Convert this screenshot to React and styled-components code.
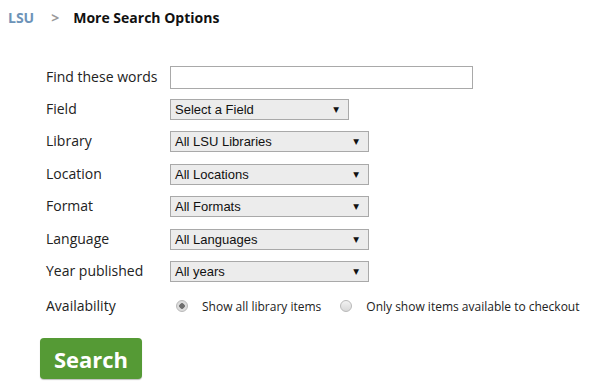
import React from 'react';
import styled, { createGlobalStyle } from 'styled-components';

const GlobalStyle = createGlobalStyle`
  body {
    margin: 0;
    background: #ffffff;
    font-family: 'Open Sans', sans-serif;
  }
`;

const Page = styled.div`
  width: 593px;
  height: 390px;
  overflow: hidden;
`;

const Breadcrumb = styled.div`
  display: flex;
  align-items: center;
  height: 34px;
  padding-left: 8px;
  font-size: 14px;
  font-weight: 700;
`;

const Crumb = styled.span`
  color: #6d93b8;
`;

const Sep = styled.span`
  color: #9a9a9a;
  margin: 0 14px 0 17px;
`;

const Current = styled.span`
  color: #111111;
`;

const Form = styled.div`
  display: grid;
  grid-template-columns: 124px auto;
  grid-auto-rows: 32.4px;
  align-items: center;
  padding: 27px 0 0 46px;
`;

const Label = styled.div`
  font-size: 14px;
  color: #222222;
  line-height: 20px;
  margin-top: ${(p) => (p.$shift ? p.$shift : -1)}px;
`;

const TextInput = styled.div`
  width: 301px;
  height: 21px;
  border: 1px solid #a9a9a9;
  background: #ffffff;
`;

const Select = styled.div`
  display: flex;
  align-items: center;
  justify-content: space-between;
  box-sizing: border-box;
  width: ${(p) => p.$width}px;
  height: 21px;
  padding: 0 9px 0 4px;
  border: 1px solid #a9a9a9;
  background: #ececec;
  font-family: 'Liberation Sans', Arial, sans-serif;
  font-size: 13px;
  color: #111111;
`;

const Arrow = styled.span`
  font-family: 'DejaVu Sans', sans-serif;
  font-size: 7.5px;
  color: #111111;
`;

const RadioRow = styled.div`
  display: flex;
  align-items: center;
  margin-top: 5px;
  padding-left: 6px;
  font-size: 12px;
  color: #222222;
  white-space: nowrap;
`;

const RadioOption = styled.label`
  display: flex;
  align-items: center;
  flex-shrink: 0;
  margin-right: 19px;
`;

const Radio = styled.span`
  display: inline-block;
  width: 10px;
  height: 10px;
  border-radius: 50%;
  border: 1px solid #b9b9b9;
  background: ${(p) =>
    p.$checked
      ? 'radial-gradient(circle, #6e6e6e 0 2.5px, #dcdcdc 3px)'
      : 'linear-gradient(#f2f2f2, #d8d8d8)'};
  margin-right: 14px;
`;

const SearchButton = styled.button`
  margin: 18px 0 0 40px;
  width: 102px;
  height: 41px;
  border: none;
  border-radius: 4px;
  background: #559a35;
  box-shadow: 0 1px 1px rgba(0, 0, 0, 0.25);
  color: #ffffff;
  font-family: 'Open Sans', sans-serif;
  font-weight: 700;
  font-size: 22px;
  padding: 0;
`;

const selects = [
  { label: 'Field', value: 'Select a Field', width: 179 },
  { label: 'Library', value: 'All LSU Libraries', width: 199 },
  { label: 'Location', value: 'All Locations', width: 199 },
  { label: 'Format', value: 'All Formats', width: 199 },
  { label: 'Language', value: 'All Languages', width: 199 },
  { label: 'Year published', value: 'All years', width: 199 },
];

export default function App() {
  return (
    <Page>
      <GlobalStyle />
      <Breadcrumb>
        <Crumb>LSU</Crumb>
        <Sep>&gt;</Sep>
        <Current>More Search Options</Current>
      </Breadcrumb>

      <Form>
        <Label>Find these words</Label>
        <TextInput />
        {selects.map((s) => (
          <React.Fragment key={s.label}>
            <Label>{s.label}</Label>
            <Select $width={s.width}>
              <span>{s.value}</span>
              <Arrow>▼</Arrow>
            </Select>
          </React.Fragment>
        ))}
        <Label $shift={5}>Availability</Label>
        <RadioRow>
          <RadioOption>
            <Radio $checked />
            Show all library items
          </RadioOption>
          <RadioOption>
            <Radio />
            Only show items available to checkout
          </RadioOption>
        </RadioRow>
      </Form>

      <SearchButton>Search</SearchButton>
    </Page>
  );
}
